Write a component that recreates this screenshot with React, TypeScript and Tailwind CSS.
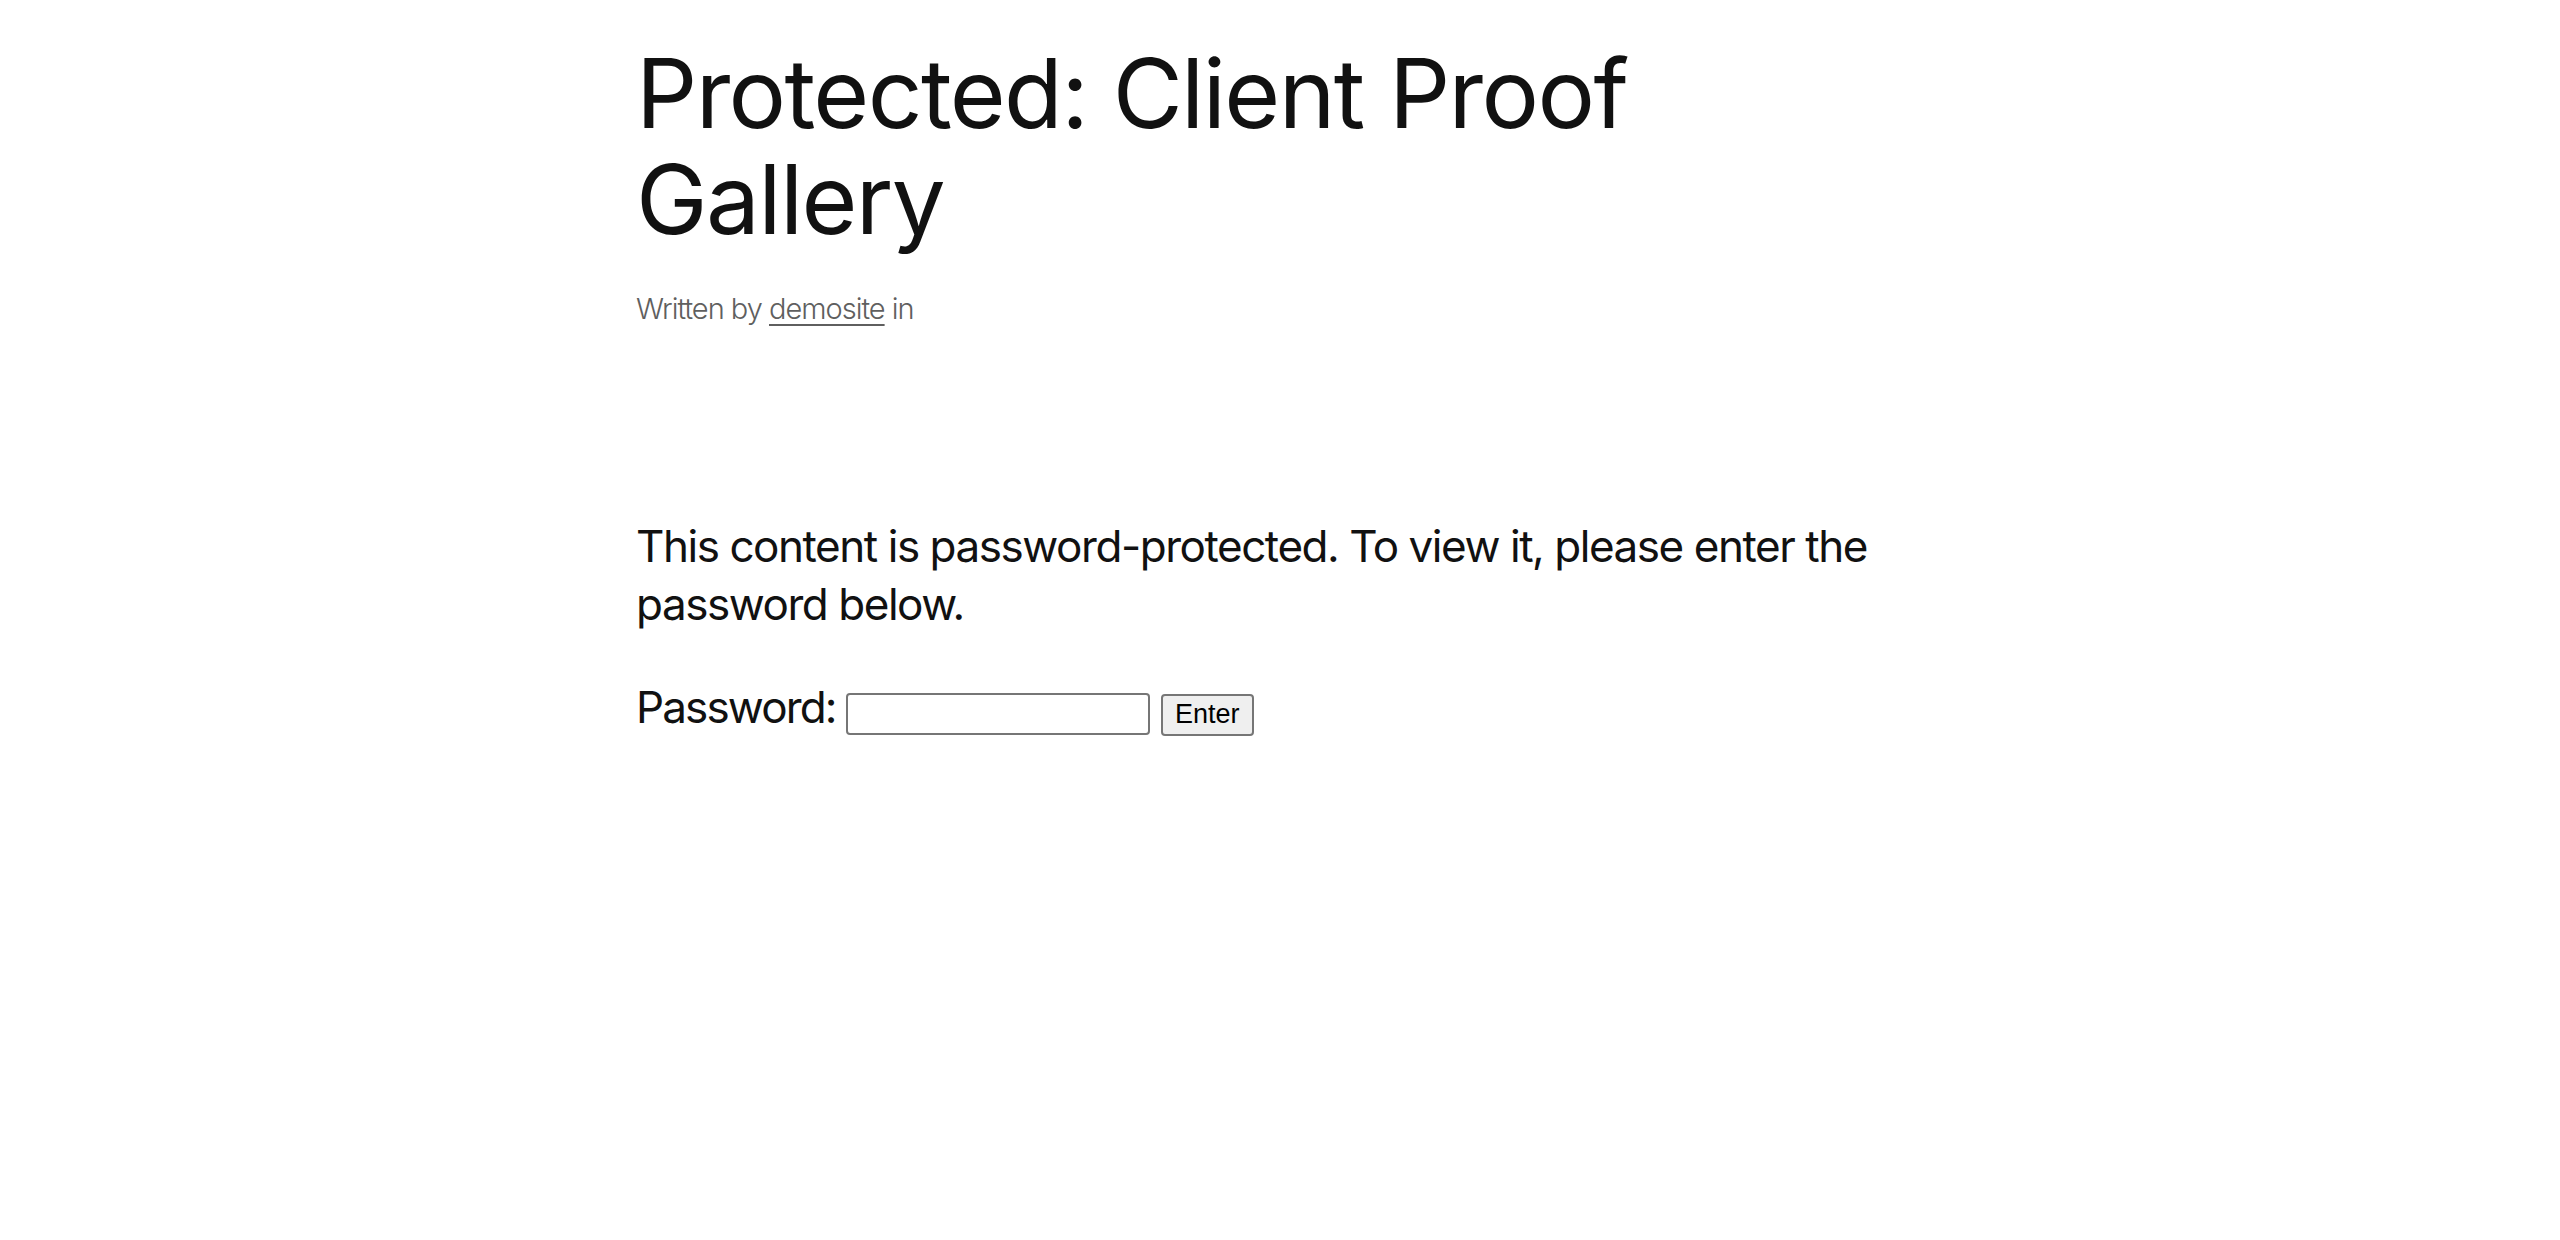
export default function App() {
  return (
    <div className="min-h-screen bg-white text-[#111111]" style={{ fontFamily: 'Inter, "Noto Sans", sans-serif' }}>
      <main className="mx-auto w-[1288px] pt-[40px]">
        <h1 className="text-[96px] leading-[106px] font-normal tracking-[-0.017em] max-w-[1150px]">
          Protected: Client Proof Gallery
        </h1>
        <p className="mt-[37px] text-[29px] leading-[40px] font-light tracking-[-0.035em] text-[#5f5f5f]">
          Written by{' '}
          <a href="#" className="underline underline-offset-[5px] decoration-[1.5px]">
            demosite
          </a>{' '}
          in
        </p>

        <form className="mt-[188px]" onSubmit={(e) => e.preventDefault()}>
          <p className="text-[44px] leading-[58px] tracking-[-0.033em]">
            This content is password-protected. To view it, please enter the password below.
          </p>
          <p className="mt-[45px] text-[44px] leading-[58px] tracking-[-0.042em]">
            <label htmlFor="pwbox">Password: </label>
            <input
              id="pwbox"
              type="password"
              className="w-[304px] h-[42px] px-[4px] align-baseline border-2 border-[#767676] rounded-[4px] bg-white text-[25px] tracking-normal"
              style={{ fontFamily: '"Liberation Sans", Arial, sans-serif' }}
            />{' '}
            <button
              type="submit"
              className="w-[93px] h-[42px] align-baseline border-2 border-[#767676] rounded-[4px] bg-[#efefef] text-[27px] tracking-normal text-black leading-none"
              style={{ fontFamily: '"Liberation Sans", Arial, sans-serif' }}
            >
              Enter
            </button>
          </p>
        </form>
      </main>
    </div>
  )
}
